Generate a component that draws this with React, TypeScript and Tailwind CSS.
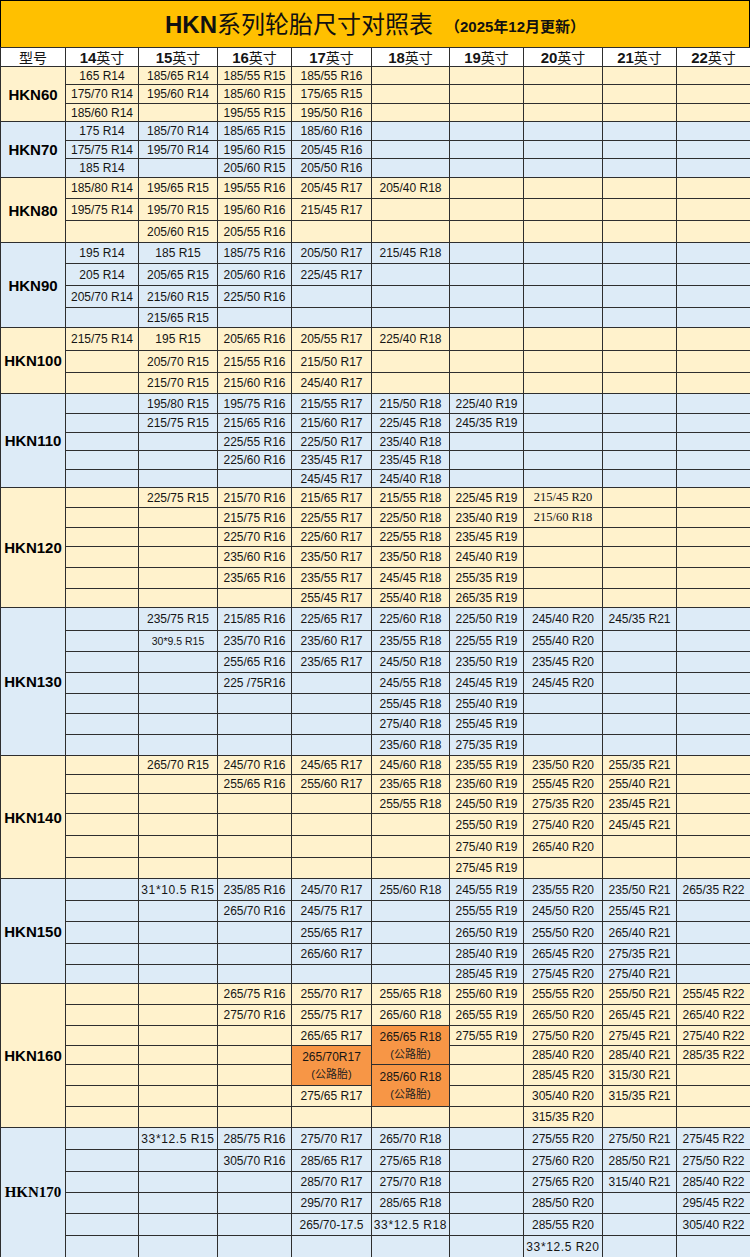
import React from "react";

type CellObj = { t: string; k?: "serif" | "small" | "wide" | "orange"; rs?: number };
type Cell = string | null | CellObj;

interface Group {
  name: string;
  color: "y" | "b";
  serif?: boolean;
  heights: number[];
  rows: Cell[][];
}

const hClass: Record<number, string> = {
  18: "h-[18px]",
  19: "h-[19px]",
  20: "h-[20px]",
  21: "h-[21px]",
  22: "h-[22px]",
  23: "h-[23px]",
};

const colClasses = [
  "w-[65px]",
  "w-[73px]",
  "w-[79px]",
  "w-[74px]",
  "w-[80px]",
  "w-[78px]",
  "w-[74px]",
  "w-[79px]",
  "w-[74px]",
  "w-[74px]",
];

const groups: Group[] = [
  {
    name: "HKN60",
    color: "y",
    heights: [18, 19, 18],
    rows: [
      ["165 R14", "185/65 R14", "185/55 R15", "185/55 R16", "", "", "", "", ""],
      ["175/70 R14", "195/60 R14", "185/60 R15", "175/65 R15", "", "", "", "", ""],
      ["185/60 R14", "", "195/55 R15", "195/50 R16", "", "", "", "", ""],
    ],
  },
  {
    name: "HKN70",
    color: "b",
    heights: [19, 18, 19],
    rows: [
      ["175 R14", "185/70 R14", "185/65 R15", "185/60 R16", "", "", "", "", ""],
      ["175/75 R14", "195/70 R14", "195/60 R15", "205/45 R16", "", "", "", "", ""],
      ["185 R14", "", "205/60 R15", "205/50 R16", "", "", "", "", ""],
    ],
  },
  {
    name: "HKN80",
    color: "y",
    heights: [21, 22, 22],
    rows: [
      ["185/80 R14", "195/65 R15", "195/55 R16", "205/45 R17", "205/40 R18", "", "", "", ""],
      ["195/75 R14", "195/70 R15", "195/60 R16", "215/45 R17", "", "", "", "", ""],
      ["", "205/60 R15", "205/55 R16", "", "", "", "", "", ""],
    ],
  },
  {
    name: "HKN90",
    color: "b",
    heights: [21, 22, 22, 20],
    rows: [
      ["195 R14", "185 R15", "185/75 R16", "205/50 R17", "215/45 R18", "", "", "", ""],
      ["205 R14", "205/65 R15", "205/60 R16", "225/45 R17", "", "", "", "", ""],
      ["205/70 R14", "215/60 R15", "225/50 R16", "", "", "", "", "", ""],
      ["", "215/65 R15", "", "", "", "", "", "", ""],
    ],
  },
  {
    name: "HKN100",
    color: "y",
    heights: [23, 22, 21],
    rows: [
      ["215/75 R14", "195 R15", "205/65 R16", "205/55 R17", "225/40 R18", "", "", "", ""],
      ["", "205/70 R15", "215/55 R16", "215/50 R17", "", "", "", "", ""],
      ["", "215/70 R15", "215/60 R16", "245/40 R17", "", "", "", "", ""],
    ],
  },
  {
    name: "HKN110",
    color: "b",
    heights: [20, 19, 18, 19, 18],
    rows: [
      ["", "195/80 R15", "195/75 R16", "215/55 R17", "215/50 R18", "225/40 R19", "", "", ""],
      ["", "215/75 R15", "215/65 R16", "215/60 R17", "225/45 R18", "245/35 R19", "", "", ""],
      ["", "", "225/55 R16", "225/50 R17", "235/40 R18", "", "", "", ""],
      ["", "", "225/60 R16", "235/45 R17", "235/45 R18", "", "", "", ""],
      ["", "", "", "245/45 R17", "245/40 R18", "", "", "", ""],
    ],
  },
  {
    name: "HKN120",
    color: "y",
    heights: [20, 20, 19, 21, 21, 19],
    rows: [
      ["", "225/75 R15", "215/70 R16", "215/65 R17", "215/55 R18", "225/45 R19", { t: "215/45 R20", k: "serif" }, "", ""],
      ["", "", "215/75 R16", "225/55 R17", "225/50 R18", "235/40 R19", { t: "215/60 R18", k: "serif" }, "", ""],
      ["", "", "225/70 R16", "225/60 R17", "225/55 R18", "235/45 R19", "", "", ""],
      ["", "", "235/60 R16", "235/50 R17", "235/50 R18", "245/40 R19", "", "", ""],
      ["", "", "235/65 R16", "235/55 R17", "245/45 R18", "255/35 R19", "", "", ""],
      ["", "", "", "255/45 R17", "255/40 R18", "265/35 R19", "", "", ""],
    ],
  },
  {
    name: "HKN130",
    color: "b",
    heights: [23, 21, 21, 21, 20, 21, 21],
    rows: [
      ["", "235/75 R15", "215/85 R16", "225/65 R17", "225/60 R18", "225/50 R19", "245/40 R20", "245/35 R21", ""],
      ["", { t: "30*9.5 R15", k: "small" }, "235/70 R16", "235/60 R17", "235/55 R18", "225/55 R19", "255/40 R20", "", ""],
      ["", "", "255/65 R16", "235/65 R17", "245/50 R18", "235/50 R19", "235/45 R20", "", ""],
      ["", "", "225 /75R16", "", "245/55 R18", "245/45 R19", "245/45 R20", "", ""],
      ["", "", "", "", "255/45 R18", "255/40 R19", "", "", ""],
      ["", "", "", "", "275/40 R18", "255/45 R19", "", "", ""],
      ["", "", "", "", "235/60 R18", "275/35 R19", "", "", ""],
    ],
  },
  {
    name: "HKN140",
    color: "y",
    heights: [19, 19, 20, 22, 22, 21],
    rows: [
      ["", "265/70 R15", "245/70 R16", "245/65 R17", "245/60 R18", "235/55 R19", "235/50 R20", "255/35 R21", ""],
      ["", "", "255/65 R16", "255/60 R17", "235/65 R18", "235/60 R19", "255/45 R20", "255/40 R21", ""],
      ["", "", "", "", "255/55 R18", "245/50 R19", "275/35 R20", "235/45 R21", ""],
      ["", "", "", "", "", "255/50 R19", "275/40 R20", "245/45 R21", ""],
      ["", "", "", "", "", "275/40 R19", "265/40 R20", "", ""],
      ["", "", "", "", "", "275/45 R19", "", "", ""],
    ],
  },
  {
    name: "HKN150",
    color: "b",
    heights: [22, 21, 22, 21, 19],
    rows: [
      ["", { t: "31*10.5 R15", k: "wide" }, "235/85 R16", "245/70 R17", "255/60 R18", "245/55 R19", "235/55 R20", "235/50 R21", "265/35 R22"],
      ["", "", "265/70 R16", "245/75 R17", "", "255/55 R19", "245/50 R20", "255/45 R21", ""],
      ["", "", "", "255/65 R17", "", "265/50 R19", "255/50 R20", "265/40 R21", ""],
      ["", "", "", "265/60 R17", "", "285/40 R19", "265/45 R20", "275/35 R21", ""],
      ["", "", "", "", "", "285/45 R19", "275/45 R20", "275/40 R21", ""],
    ],
  },
  {
    name: "HKN160",
    color: "y",
    heights: [21, 21, 20, 19, 21, 21, 21],
    rows: [
      ["", "", "265/75 R16", "255/70 R17", "255/65 R18", "255/60 R19", "255/55 R20", "255/50 R21", "255/45 R22"],
      ["", "", "275/70 R16", "255/75 R17", "265/60 R18", "265/55 R19", "265/50 R20", "265/45 R21", "265/40 R22"],
      ["", "", "", "265/65 R17", { t: "265/65 R18", k: "orange", rs: 2 }, "275/55 R19", "275/50 R20", "275/45 R21", "275/40 R22"],
      ["", "", "", { t: "265/70R17", k: "orange", rs: 2 }, null, "", "285/40 R20", "285/40 R21", "285/35 R22"],
      ["", "", "", null, { t: "285/60 R18", k: "orange", rs: 2 }, "", "285/45 R20", "315/30 R21", ""],
      ["", "", "", "275/65 R17", null, "", "305/40 R20", "315/35 R21", ""],
      ["", "", "", "", "", "", "315/35 R20", "", ""],
    ],
  },
  {
    name: "HKN170",
    color: "b",
    serif: true,
    heights: [22, 22, 21, 21, 22, 22],
    rows: [
      ["", { t: "33*12.5 R15", k: "wide" }, "285/75 R16", "275/70 R17", "265/70 R18", "", "275/55 R20", "275/50 R21", "275/45 R22"],
      ["", "", "305/70 R16", "285/65 R17", "275/65 R18", "", "275/60 R20", "285/50 R21", "275/50 R22"],
      ["", "", "", "285/70 R17", "275/70 R18", "", "275/65 R20", "315/40 R21", "285/40 R22"],
      ["", "", "", "295/70 R17", "285/65 R18", "", "285/50 R20", "", "295/45 R22"],
      ["", "", "", "265/70-17.5", { t: "33*12.5 R18", k: "wide" }, "", "285/55 R20", "", "305/40 R22"],
      ["", "", "", "", "", "", { t: "33*12.5 R20", k: "wide" }, "", ""],
    ],
  },
];

const sizes = ["14", "15", "16", "17", "18", "19", "20", "21", "22"];

const tdBase =
  "border border-[#2e2e2e] p-0 text-center align-middle whitespace-nowrap leading-none text-[#151515]";

function renderCell(c: Cell, key: string, bg: string) {
  if (c === null) return null;
  if (typeof c === "string") {
    return (
      <td key={key} className={`${tdBase} ${bg} text-[12px]`}>
        {c}
      </td>
    );
  }
  if (c.k === "orange") {
    return (
      <td key={key} rowSpan={c.rs} className={`${tdBase} bg-[#F79646] text-[12px]`}>
        <div className="flex flex-col items-center justify-center gap-[6px]">
          <span>{c.t}</span>
          <span className="text-[11px] text-[#222]">(公路胎)</span>
        </div>
      </td>
    );
  }
  if (c.k === "serif") {
    return (
      <td key={key} rowSpan={c.rs} className={`${tdBase} ${bg} font-['Liberation_Serif',serif] text-[12.5px] text-[#222]`}>
        {c.t}
      </td>
    );
  }
  if (c.k === "small") {
    return (
      <td key={key} rowSpan={c.rs} className={`${tdBase} ${bg} text-[10.5px] text-[#333]`}>
        {c.t}
      </td>
    );
  }
  return (
    <td key={key} rowSpan={c.rs} className={`${tdBase} ${bg} text-[12px] tracking-[0.6px]`}>
      {c.t}
    </td>
  );
}

export default function App() {
  return (
    <div className="w-[750px] bg-white font-['Liberation_Sans','Noto_Sans_CJK_SC',sans-serif]">
      <div className="flex h-[47px] items-center justify-center border-x border-t border-black bg-[#FFC000]">
        <span className="text-[24px] leading-none text-[#111]">
          <span className="font-bold">HKN</span>
          <span className="font-['Noto_Sans_CJK_SC',sans-serif]">系列轮胎尺寸对照表</span>
        </span>
        <span className="ml-[12px] mt-[4px] font-['Liberation_Sans','Noto_Sans_CJK_SC',sans-serif] text-[15px] font-bold leading-none text-[#111]">
          （2025年12月更新）
        </span>
      </div>
      <table className="w-[750px] table-fixed border-collapse">
        <colgroup>
          {colClasses.map((c, i) => (
            <col key={i} className={c} />
          ))}
        </colgroup>
        <tbody>
          <tr className="h-[19px] bg-white">
            <td className={`${tdBase} text-[14px]`}>
              <span className="font-['Noto_Sans_CJK_SC',sans-serif]">型号</span>
            </td>
            {sizes.map((s) => (
              <td key={s} className={`${tdBase} text-[15px]`}>
                <span className="font-bold">{s}</span>
                <span className="font-['Noto_Sans_CJK_SC',sans-serif] text-[14px]">英寸</span>
              </td>
            ))}
          </tr>
          {groups.map((g) => {
            const bg = g.color === "y" ? "bg-[#FFF2CC]" : "bg-[#DDEBF7]";
            return g.rows.map((row, ri) => (
              <tr key={`${g.name}-${ri}`} className={hClass[g.heights[ri]]}>
                {ri === 0 && (
                  <td
                    rowSpan={g.rows.length}
                    className={`${tdBase} ${bg} text-[15px] font-bold text-black ${
                      g.serif ? "font-['Liberation_Serif',serif]" : ""
                    }`}
                  >
                    {g.name}
                  </td>
                )}
                {row.map((c, ci) => renderCell(c, `${g.name}-${ri}-${ci}`, bg))}
              </tr>
            ));
          })}
        </tbody>
      </table>
    </div>
  );
}
